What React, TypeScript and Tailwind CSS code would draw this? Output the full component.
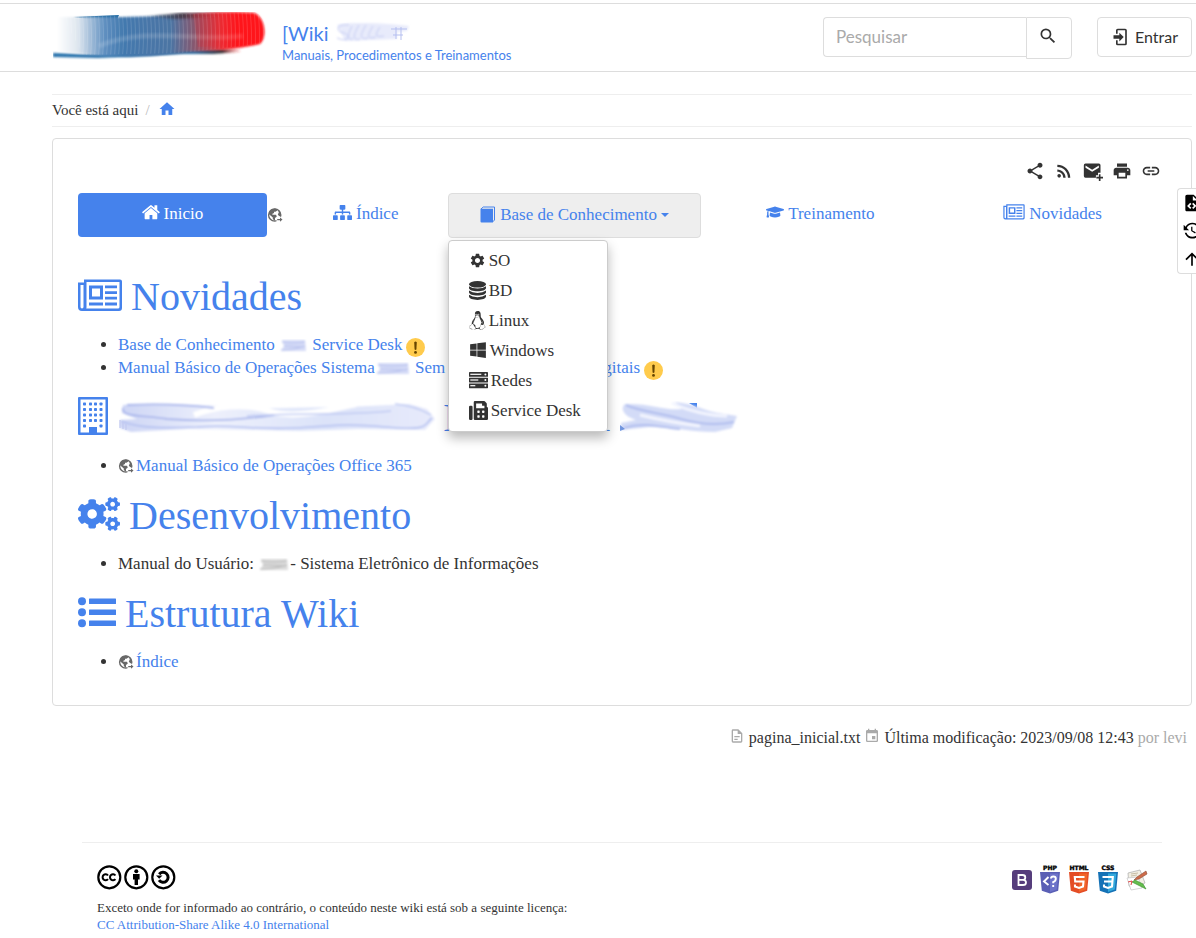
import React from "react";
import { FaCogs, FaFax, FaGraduationCap, FaLinux, FaSitemap, FaWindows } from "react-icons/fa";
import { MdHome, MdLink, MdPrint, MdRssFeed, MdSettings, MdShare } from "react-icons/md";

const P = {
  magnify:
    "M9.5,3A6.5,6.5 0 0,1 16,9.5C16,11.11 15.41,12.59 14.44,13.73L14.71,14H15.5L20.5,19L19,20.5L14,15.5V14.71L13.73,14.44C12.59,15.41 11.11,16 9.5,16A6.5,6.5 0 0,1 3,9.5A6.5,6.5 0 0,1 9.5,3M9.5,5C7,5 5,7 5,9.5C5,12 7,14 9.5,14C12,14 14,12 14,9.5C14,7 12,5 9.5,5Z",
  login:
    "M10,17.25V14H3V10H10V6.75L15.25,12L10,17.25M8,2H17A2,2 0 0,1 19,4V20A2,2 0 0,1 17,22H8A2,2 0 0,1 6,20V16H8V20H17V4H8V8H6V4A2,2 0 0,1 8,2Z",
  mailPlus:
    "M3 3A2 2 0 0 0 1 5V18A2 2 0 0 0 3 20H15.5V17H18V14H21V5A2 2 0 0 0 19 3H3M3 5.5L11 10.5L19 5.5V8L11 13L3 8V5.5M19 16V19H16V21H19V24H21V21H24V19H21V16H19Z",
  fileXml:
    "M13,9H18.5L13,3.5V9M6,2H14L20,8V20A2,2 0 0,1 18,22H6C4.89,22 4,21.1 4,20V4C4,2.89 4.89,2 6,2M6.12,15.5L9.86,19.24L11.28,17.83L8.95,15.5L11.28,13.17L9.86,11.76L6.12,15.5M17.28,15.5L13.54,11.76L12.12,13.17L14.45,15.5L12.12,17.83L13.54,19.24L17.28,15.5Z",
  history:
    "M11,7V12.11L15.71,14.9L16.5,13.62L12.5,11.25V7M12.5,2C8.97,2 5.91,3.92 4.27,6.77L2,4.5V11H8.5L5.75,8.25C6.96,5.73 9.5,4 12.5,4A7.5,7.5 0 0,1 20,11.5A7.5,7.5 0 0,1 12.5,19C9.23,19 6.47,16.91 5.44,14H3.34C4.44,18.03 8.11,21 12.5,21C17.74,21 22,16.75 22,11.5A9.5,9.5 0 0,0 12.5,2Z",
  arrowUp: "M13,20H11V8L5.5,13.5L4.08,12.08L12,4.16L19.92,12.08L18.5,13.5L13,8V20Z",
  file: "M6,2A2,2 0 0,0 4,4V20A2,2 0 0,0 6,22H18A2,2 0 0,0 20,20V8L14,2H6M6,4H13V9H18V20H6V4M8,12V14H16V12H8M8,16V18H13V16H8Z",
  calendar:
    "M19,19H5V8H19M16,1V3H8V1H6V3H5C3.89,3 3,3.89 3,5V19A2,2 0 0,0 5,21H19A2,2 0 0,0 21,19V5C21,3.89 20.1,3 19,3H18V1M17,12H12V17H17V12Z",
};

function Mdi({ d, className }: { d: string; className: string }) {
  return (
    <svg viewBox="0 0 24 24" fill="currentColor" aria-hidden="true" className={className}>
      <path d={d} />
    </svg>
  );
}

function Logo() {
  return (
    <svg viewBox="0 0 214 48" className="mb-1 h-12 w-[214px] shrink-0" aria-hidden="true">
      <defs>
        <linearGradient id="lg" x1="0" x2="1">
          <stop offset="0" stopColor="#fff" />
          <stop offset=".1" stopColor="#dfe7ef" />
          <stop offset=".23" stopColor="#5f8fc0" />
          <stop offset=".32" stopColor="#4379ae" />
          <stop offset=".55" stopColor="#4c74a3" />
          <stop offset=".66" stopColor="#86586f" />
          <stop offset=".8" stopColor="#ee2c33" />
          <stop offset=".88" stopColor="#ff151b" />
        </linearGradient>
        <linearGradient id="ll" x1="0" x2="1">
          <stop offset="0" stopColor="#2772ac" />
          <stop offset=".75" stopColor="#2f70a5" />
          <stop offset=".9" stopColor="#3d3338" />
          <stop offset="1" stopColor="#ff2020" stopOpacity=".1" />
        </linearGradient>
        <linearGradient id="lt" x1="0" x2="1">
          <stop offset="0" stopColor="#3a3a40" stopOpacity="0" />
          <stop offset=".5" stopColor="#3a2a30" stopOpacity=".7" />
          <stop offset="1" stopColor="#ff2020" stopOpacity="0" />
        </linearGradient>
        <pattern id="lr" width="4" height="48" patternUnits="userSpaceOnUse">
          <path d="M1 0C3 15 3 33 1 48" fill="none" stroke="#fff" strokeOpacity=".13" />
        </pattern>
        <filter id="b1" x="-10%" y="-30%" width="120%" height="160%">
          <feGaussianBlur stdDeviation="1" />
        </filter>
      </defs>
      <path d="M20 5L66 3L64 8H40Z" fill="#226ca4" />
      <path d="M0 41L30 42L110 36L186 37L188 40L160 42L130 42L45 46L0 45Z" fill="url(#ll)" filter="url(#b1)" />
      <path d="M4 5C45 5 90 6 125 2C155 0 186 0 201 1C213 6 214 26 207 32C195 35 184 36 170 38L133 40C90 46 70 46 20 41L4 39Z" fill="url(#lg)" filter="url(#b1)" />
      <path d="M90 4L125 1L170 1V5L120 7Z" fill="url(#lt)" filter="url(#b1)" />
      <path d="M46 34C95 14 140 30 190 24" fill="none" stroke="#fff" strokeOpacity=".14" strokeWidth="5" filter="url(#b1)" />
      <path d="M140 2C155 0 186 0 201 0C214 4 215 28 206 32C190 35 155 34 145 35Z" fill="#ff151b" fillOpacity=".15" />
      <path d="M10 5L125 2L200 0C214 4 215 28 206 32L130 41L30 43Z" fill="url(#lr)" />
    </svg>
  );
}

function TitleSmudge() {
  return (
    <svg viewBox="0 0 76 24" className="h-6 w-[76px]" aria-hidden="true">
      <defs>
        <filter id="b2"><feGaussianBlur stdDeviation=".9" /></filter>
      </defs>
      <path d="M2 4C15 0 60 3 74 5L72 10L62 11V18L10 20Z" fill="#e8ebfb" filter="url(#b2)" />
      <path d="M14 4Q3 3 3 8Q3 11 9 12Q15 14 12 18Q8 20 2 17M17 5Q9 20 18 18M24 4Q14 21 25 18M31 4Q21 20 33 17M38 5Q28 20 41 16M45 6Q36 18 49 15" fill="none" stroke="#c4cbf2" strokeWidth="1" filter="url(#b2)" />
      <path d="M56 8H72M58 14H68M66 6V19M61 6V18" stroke="#b5bff0" strokeWidth="1" fill="none" />
    </svg>
  );
}

function Smear({ className, w, tone }: { className: string; w: number; tone: "blue" | "gray" }) {
  const id = `sm${w}${tone}`;
  const base = tone === "blue" ? "#d6dcf7" : "#dcdcdc";
  const dark = tone === "blue" ? "#b3bdec" : "#b3b3b3";
  return (
    <svg viewBox={`0 0 ${w} 14`} className={className} aria-hidden="true">
      <defs>
        <filter id={id} x="-20%" y="-30%" width="140%" height="160%"><feGaussianBlur stdDeviation="1" /></filter>
      </defs>
      <g filter={`url(#${id})`} fill="none">
        <path d={`M3 1H${w - 3}L${w - 2} 12H2L5 7Z`} fill={base} />
        <path d={`M3 3Q${w / 2} 5 ${w - 3} 3M2 11Q${w / 2} 11 ${w - 3} 7M5 7L${w - 5} 8`} stroke={dark} strokeWidth="1.2" />
      </g>
    </svg>
  );
}

function LongSmear() {
  return (
    <svg viewBox="0 0 320 34" className="h-[34px] w-80 shrink-0" aria-hidden="true">
      <defs>
        <linearGradient id="ls" x1="0" x2="1">
          <stop offset="0" stopColor="#cdd5f5" />
          <stop offset=".3" stopColor="#edf0fc" />
          <stop offset=".65" stopColor="#dce3f9" />
          <stop offset="1" stopColor="#e7eafb" />
        </linearGradient>
        <filter id="b3"><feGaussianBlur stdDeviation="1.3" /></filter>
      </defs>
      <g filter="url(#b3)" fill="none">
        <path d="M4 4C60 0 100 6 160 7L230 6L290 3L308 8L316 18L306 29L240 28L180 30L70 28L12 31L1 27L1 19L18 18L3 12Z" fill="url(#ls)" />
        <path d="M75 14C95 6 125 1 150 10S215 8 237 3" stroke="#fff" strokeWidth="6" />
        <path d="M8 4C45 2 70 4 95 7M4 7C2 17 28 14 48 18C85 21 115 20 155 14" stroke="#aab7ec" strokeWidth="1.8" />
        <path d="M2 20C20 28 50 27 78 26C115 23 132 29 175 27S220 22 266 26S304 24 313 17" stroke="#b3c0f0" strokeWidth="1.6" />
        <path d="M128 15C190 11 218 15 272 10M276 3C298 5 306 11 312 14" stroke="#c0cbf3" strokeWidth="1.5" />
      </g>
      <path d="M1 19V27M4 21V28M7 23V29" stroke="#c3caf1" strokeWidth="1.2" />
    </svg>
  );
}

function ShortSmear() {
  return (
    <svg viewBox="0 0 120 34" className="h-[34px] w-[120px] shrink-0" aria-hidden="true">
      <defs><filter id="b4"><feGaussianBlur stdDeviation="1.2" /></filter></defs>
      <path d="M69 2H77V7Z" fill="#4582ec" />
      <g filter="url(#b4)">
        <path d="M5 3C30 2 45 10 62 8L55 1C75 3 85 10 98 12L117 15L112 27L95 31C70 31 55 26 30 26L1 29V22L16 19C3 15 0 7 5 3Z" fill="#d3dbf7" />
        <path d="M6 4C20 11 45 12 61 18C82 24 100 24 114 21M4 27C25 20 45 27 60 28" fill="none" stroke="#b0bdee" strokeWidth="2" />
        <path d="M20 14C40 19 55 22 80 25M52 2C68 10 91 15 107 15" fill="none" stroke="#f3f5fe" strokeWidth="3" />
      </g>
      <path d="M0 24V30L5 28Z" fill="#547fd7" fillOpacity=".8" />
    </svg>
  );
}

function Globe() {
  return (
    <svg viewBox="0 0 16 16" className="inline-block size-4 shrink-0 text-[#686868]" aria-hidden="true">
      <circle cx="7.7" cy="8" r="6.1" fill="#fff" stroke="currentColor" strokeWidth="1.4" />
      <path d="M2 5L4 2.4L8 1.4L10 2.2V3.8L8.4 4.8H7V6L5.4 6.8V7.8H9L9.8 9.6L8 11V14L5.8 12V10.4L2 7.2Z" fill="currentColor" />
      <path d="M11.2 3L13.6 6V9H12L10.8 7.6L11.8 5.6Z" fill="currentColor" />
      <path d="M10 9.8H16V15H9.5V11.5Z" fill="#fff" />
      <path d="M10.2 11.9H13V10.4L15.5 12.6L13 14.8V13.3H10.2Z" fill="currentColor" />
    </svg>
  );
}

function Newspaper({ className }: { className: string }) {
  return (
    <svg viewBox="0 0 44 33" className={className} fill="currentColor" aria-hidden="true">
      <path fillRule="evenodd" d="M6 .5H42Q44 .5 44 2.5V29Q44 32 41 32H4Q0 32 0 28V3.5H6ZM8.5 3V28Q8.5 29 8.2 29.5H40Q41.5 29.5 41.5 28V3ZM2.5 6V28Q2.5 29.4 4 29.4T5.5 28V6Z" />
      <path fillRule="evenodd" d="M11 6.5H25V20.5H11ZM14 9.5V17.5H22V9.5Z" />
      <path d="M27 6.5H39V9.3H27ZM27 12.2H39V15H27ZM27 17.8H39V20.6H27ZM11 23.6H25V26.4H11ZM27 23.6H39V26.4H27Z" />
    </svg>
  );
}

function Building() {
  const xs = [5, 11, 16, 21.5];
  const ys = [5.5, 11, 16.5, 22, 27.5];
  return (
    <svg viewBox="0 0 30 38" className="h-[38px] w-[30px] shrink-0" fill="currentColor" aria-hidden="true">
      <path fillRule="evenodd" d="M1 0H29Q30 0 30 1V37Q30 38 29 38H1Q0 38 0 37V1Q0 0 1 0ZM2.5 2.5V35.5H11V30H19V35.5H27.5V2.5Z" />
      {ys.map((y, r) =>
        xs.map((x, c) => (r === 4 && (c === 1 || c === 2) ? null : <rect key={`${r}-${c}`} x={x} y={y} width="3" height="3" rx=".7" />)),
      )}
    </svg>
  );
}

function ListUl() {
  return (
    <svg viewBox="0 0 38 31" className="h-[31px] w-[38px] shrink-0" fill="currentColor" aria-hidden="true">
      {[4.2, 15.2, 26.2].map((y) => (
        <g key={y}>
          <circle cx="4" cy={y} r="4" />
          <rect x="11" y={y - 2.7} width="27" height="5.4" rx=".5" />
        </g>
      ))}
    </svg>
  );
}

function House() {
  return (
    <svg viewBox="80 200 1640 1360" className="h-4 w-[18px] shrink-0" fill="currentColor" aria-hidden="true">
      <path d="M1472 992v480q0 26-19 45t-45 19h-384v-384h-256v384h-384q-26 0-45-19t-19-45v-480q0-1 .5-3t.5-3l575-474 575 474q1 2 1 6zm223-69l-62 74q-8 9-21 11h-3q-13 0-21-7l-692-577-692 577q-12 8-24 7-13-2-21-11l-62-74q-8-10-7-23.5t11-21.5l719-599q32-26 76-26t76 26l244 204v-195q0-14 9-23t23-9h192q14 0 23 9t9 23v408l219 182q10 8 11 21.5t-7 23.5z" />
    </svg>
  );
}

function Book() {
  return (
    <svg viewBox="0 0 16 17" className="h-[17px] w-4 shrink-0" aria-hidden="true">
      <path d="M1 3L3.2 1H14.5V14L12.5 16" fill="none" stroke="#4582ec" strokeWidth="1" />
      <path d="M.5 2.7H13V16.5H1.5Q.5 16.5 .5 15.5Z" fill="#4582ec" />
    </svg>
  );
}

function Database() {
  return (
    <svg viewBox="0 0 17 19" className="h-[19px] w-[17px] shrink-0" fill="currentColor" aria-hidden="true">
      <ellipse cx="8.5" cy="3.3" rx="8.5" ry="3.3" />
      {[0, 4.3, 8.6].map((y) => (
        <path key={y} transform={`translate(0 ${y})`} d="M0 5.2Q3 7.6 8.5 7.6T17 5.2V7C17 9 13 10.3 8.5 10.3S0 9 0 7Z" />
      ))}
    </svg>
  );
}

function Server() {
  return (
    <svg viewBox="0 0 19 17" className="h-[17px] w-[19px] shrink-0" aria-hidden="true">
      {[0, 5.7, 11.4].map((y, i) => (
        <g key={y}>
          <rect y={y} width="19" height="4.8" rx=".4" fill="#333" />
          <rect x="1.3" y={y + 1.7} width={i === 0 ? 11 : i === 1 ? 8 : 5} height="1.2" fill="#fff" />
          <circle cx="16.4" cy={y + 2.4} r="1" fill="#fff" />
        </g>
      ))}
    </svg>
  );
}

function Warn() {
  return (
    <svg viewBox="0 0 19 19" className="ml-1 inline-block size-[19px] shrink-0 translate-y-px" role="img" aria-label="Atenção">
      <circle cx="9.5" cy="9.5" r="9.5" fill="#ffcb4c" />
      <path d="M8.2 4.2Q9.5 3 10.8 4.2L10.4 11.6Q9.5 12.4 8.6 11.6Z" fill="#664500" />
      <circle cx="9.5" cy="14.4" r="1.4" fill="#664500" />
    </svg>
  );
}

function License() {
  return (
    <svg viewBox="0 0 79 25" className="h-[25px] w-[79px]" role="img" aria-label="CC BY-SA">
      <g fill="none" stroke="#000" strokeWidth="2.2">
        <circle cx="12.3" cy="12.3" r="11" />
        <circle cx="39.3" cy="12.3" r="11" />
        <circle cx="66.3" cy="12.3" r="11" />
        <path d="M11 10.5A3 3 0 1 0 11 14.1M18.4 10.5A3 3 0 1 0 18.4 14.1" strokeWidth="2" />
        <path d="M62.2 9.2A5 5 0 1 1 62 15.2" strokeWidth="3" />
      </g>
      <path d="M59 10.5H65.5L62.2 13.8Z" />
      <circle cx="39.3" cy="6.2" r="2" />
      <path d="M36 9H42.6V14.5H41V20H37.6V14.5H36Z" />
    </svg>
  );
}

function Shield({ id, label, dark, light, children }: { id: string; label: string; dark: string; light: string; children: React.ReactNode }) {
  return (
    <svg viewBox="0 0 22 29" className="h-[29px] w-[22px]" role="img" aria-label={id}>
      <text x="11" y="5" textAnchor="middle" fontSize="6" fontWeight="900" fontFamily="DejaVu Sans, sans-serif" stroke="#000" strokeWidth=".4">{label}</text>
      <path d="M1 7H21L19.2 25.8L11 28.5L2.8 25.8Z" fill={dark} />
      <path d="M11 8.5H19.3L17.8 24.6L11 26.9Z" fill={light} />
      <g fill="none" stroke="#fff" strokeWidth="2.1">{children}</g>
    </svg>
  );
}

function Badges() {
  return (
    <div className="flex items-center gap-[7px]">
      <a href="#bootstrap" aria-label="Bootstrap">
        <svg viewBox="0 0 20 20" className="size-5">
          <rect width="20" height="20" rx="3" fill="#563d7c" />
          <path d="M6.5 5H10.5Q13.3 5 13.3 7.4T10.7 9.8H6.5ZM6.5 9.8H11Q14 9.8 14 12.4T11 15H6.5Z" fill="none" stroke="#fff" strokeWidth="1.8" />
        </svg>
      </a>
      <a href="#php"><Shield id="PHP" label="PHP" dark="#5a5fb5" light="#6d73c9"><path d="M9.5 12L5 16.5L9.5 20M12 13.5Q12 11.5 14.4 11.5T16.8 13.7T14.2 17V18.3M14.2 20V22" strokeWidth="1.9" /></Shield></a>
      <a href="#html"><Shield id="HTML5" label="HTML" dark="#e44d26" light="#f16529"><path d="M16.5 12H6.8L7.2 16.5H15.5L15 21.5L11 23L7 21.5V19.5" /></Shield></a>
      <a href="#css"><Shield id="CSS3" label="CSS" dark="#1572b6" light="#33a9dc"><path d="M5.5 12H15.8L15 21.5L11 23L7 21.5V19.5M7 16.5H15.5" /></Shield></a>
      <a href="#dokuwiki" aria-label="DokuWiki">
        <svg viewBox="0 0 22 22" className="size-[22px]">
          <path d="M2 4L14 1L19 14L9 19L3 17Z" fill="#f2efe4" stroke="#aaa" strokeWidth=".7" />
          <path d="M1 9L12 8L16 19L5 21Z" fill="#fff" stroke="#bbb" strokeWidth=".6" />
          <path d="M5 5L12 4M5 7L11 6" stroke="#c8bea6" />
          <path d="M20 2L11 8L8 11L13 10L21 5Z" fill="#ce6b49" stroke="#8a4c36" strokeWidth=".6" />
          <path d="M6 13L16 18L20 20L17 15L9 11Z" fill="#64bd4d" stroke="#358b2a" strokeWidth=".6" />
          <path d="M2 13L6 12L5 16" stroke="#e04444" fill="none" />
        </svg>
      </a>
    </div>
  );
}

const MENU = [
  { label: "SO", icon: <MdSettings className="size-[17px]" /> },
  { label: "BD", icon: <Database /> },
  { label: "Linux", icon: <FaLinux className="h-[19px] w-[17px]" /> },
  { label: "Windows", icon: <FaWindows className="size-[18px]" /> },
  { label: "Redes", icon: <Server /> },
  { label: "Service Desk", icon: <FaFax className="size-[19px]" /> },
];

const H = "mt-[19px] flex h-10 items-center gap-[9px] text-[40px] leading-10 text-[#4582ec] [&>svg]:mb-1";
const UL = "mt-4 list-disc pl-10 leading-[23px]";
const NAV = "flex h-11 items-center justify-center gap-1 rounded pb-0.5 [&>svg]:mb-1";

export default function App() {
  return (
    <div className="relative bg-white pt-[3px] font-['Liberation_Serif',serif] text-[17px] text-[#333]">
      <header className="flex h-[69px] items-center border-y border-[#ddd] pr-1 pl-[53px] font-[Lato,sans-serif]">
        <Logo />
        <a href="#wiki" className="ml-[15px] block pt-2 text-[#4582ec]">
          <span className="flex h-[26px] items-center gap-1.5 text-xl">
            [Wiki <TitleSmudge />
          </span>
          <span className="block text-[13px] leading-[18px]">Manuais, Procedimentos e Treinamentos</span>
        </a>
        <div className="ml-auto flex items-start">
          <form className="flex items-start" onSubmit={(e) => e.preventDefault()}>
            <input
              type="search"
              aria-label="Pesquisar"
              placeholder="Pesquisar"
              className="h-10 w-[203px] rounded-l border border-r-0 border-[#ddd] px-3 text-[17px] outline-none placeholder:text-[#aaa]"
            />
            <button type="submit" aria-label="Buscar" className="flex h-[42px] w-[46px] items-center justify-center rounded-r border border-[#ddd] pr-0.5 pb-1">
              <Mdi d={P.magnify} className="size-5" />
            </button>
          </form>
          <button type="button" className="ml-[25px] flex h-10 w-[95px] items-center justify-center gap-1 rounded border border-[#ddd] text-base">
            <Mdi d={P.login} className="size-5" />
            Entrar
          </button>
        </div>
      </header>

      <div className="pr-1 pl-[52px]">
        <nav aria-label="Você está aqui" className="mt-[22px] flex h-[33px] items-center border-y border-[#eee] text-[15px]">
          <span>Você está aqui</span>
          <span className="ml-[7px] text-[#bbb]">/</span>
          <a href="#home" aria-label="Início" className="mb-1 ml-2 text-[#4582ec]">
            <MdHome className="size-[18px]" />
          </a>
        </nav>

        <main className="mt-[11px] rounded border border-[#ddd] px-[25px] pt-[22px] pb-8">
          <div className="flex justify-end gap-[9px] pr-[5px]">
            <button type="button" aria-label="Compartilhar"><MdShare className="size-5" /></button>
            <button type="button" aria-label="Feed"><MdRssFeed className="size-5" /></button>
            <button type="button" aria-label="Enviar por e-mail"><Mdi d={P.mailPlus} className="size-5" /></button>
            <button type="button" aria-label="Imprimir"><MdPrint className="size-5" /></button>
            <button type="button" aria-label="Link"><MdLink className="size-5" /></button>
          </div>

          <nav aria-label="Principal" className="mt-3 grid grid-cols-[206fr_164fr_254fr_238fr_227fr] items-start">
            <div className="flex items-center">
              <a href="#inicio" className={`${NAV} flex-1 bg-[#4582ec] text-white`}>
                <House /> Inicio
              </a>
              <span className="flex w-[17px]"><Globe /></span>
            </div>
            <a href="#indice" className={`${NAV} text-[#4582ec]`}><FaSitemap className="size-[19px]" /> Índice</a>
            <div className="relative">
              <button type="button" aria-expanded="true" aria-haspopup="menu" className="flex h-[45px] w-full items-center justify-center gap-1 rounded border border-[#ddd] bg-[#eee] pb-0.5 text-[#4582ec]">
                <Book /> Base de Conhecimento
                <svg viewBox="0 0 8 4" className="h-1 w-2" fill="currentColor" aria-hidden="true"><path d="M0 0H8L4 4Z" /></svg>
              </button>
              <ul className="absolute top-[47px] left-0 z-10 w-40 rounded border border-[#ccc] bg-white py-[5px] shadow-[0_6px_12px_rgba(0,0,0,0.28)]">
                {MENU.map((m) => (
                  <li key={m.label}>
                    <a href={`#${m.label}`} className="flex h-[30px] items-center gap-[3px] pl-5 [&>svg]:mb-0.5">
                      {m.icon}
                      {m.label}
                    </a>
                  </li>
                ))}
              </ul>
            </div>
            <a href="#treinamento" className={`${NAV} text-[#4582ec]`}><FaGraduationCap className="size-[18px]" /> Treinamento</a>
            <a href="#novidades" className={`${NAV} text-[#4582ec]`}><Newspaper className="h-4 w-[22px]" /> Novidades</a>
          </nav>

          <div className="pt-5">
            <h1 className={H}><Newspaper className="h-[33px] w-11 shrink-0" /> Novidades</h1>
            <ul className={UL}>
              <li className="h-[23px]">
                <a href="#base" className="text-[#4582ec]">
                  Base de Conhecimento <Smear w={29} tone="blue" className="inline-block h-3.5 w-[29px]" /> Service Desk
                </a>
                <Warn />
              </li>
              <li className="h-[23px] whitespace-nowrap">
                <a href="#manual" className="text-[#4582ec]">
                  Manual Básico de Operações Sistema
                  <Smear w={36} tone="blue" className="inline-block h-3.5 w-9" /> Sem
                  <span className="inline-block w-[158px]" />
                  gitais
                </a>
                <Warn />
              </li>
            </ul>

            <h2 className={H}>
              <Building />
              <span className="ml-0.5 flex items-center">
                <LongSmear />
                <span className="ml-1">I</span>
                <span className="ml-[143px]">l</span>
                <span className="ml-2.5"><ShortSmear /></span>
              </span>
            </h2>
            <ul className={UL}>
              <li><a href="#office" className="inline-flex items-center gap-0.5 align-top text-[#4582ec]"><Globe />Manual Básico de Operações Office 365</a></li>
            </ul>

            <h2 className={H}><FaCogs className="size-[42px] shrink-0" /> Desenvolvimento</h2>
            <ul className={UL}>
              <li>Manual do Usuário: <Smear w={32} tone="gray" className="inline-block h-3.5 w-8" />- Sistema Eletrônico de Informações</li>
            </ul>

            <h2 className={H}><ListUl /> Estrutura Wiki</h2>
            <ul className={UL}>
              <li><a href="#indice" className="inline-flex items-center gap-0.5 align-top text-[#4582ec]"><Globe />Índice</a></li>
            </ul>
          </div>
        </main>

        <div className="mt-[22px] flex h-5 items-center justify-end gap-1 pr-[5px] text-base [&>svg]:mb-1">
          <Mdi d={P.file} className="size-4 text-[#aaa]" />
          <span>pagina_inicial.txt</span>
          <Mdi d={P.calendar} className="size-4 text-[#aaa]" />
          <span>Última modificação: 2023/09/08 12:43</span>
          <span className="text-[#aaa]">por levi</span>
        </div>

        <footer className="mx-[30px] mt-[94px] flex items-start justify-between border-t border-[#eee] pt-[22px] pr-3.5 pl-[15px] text-[13px] leading-[17px]">
          <div>
            <License />
            <p className="mt-[9px]">Exceto onde for informado ao contrário, o conteúdo neste wiki está sob a seguinte licença:</p>
            <a href="#licenca" className="text-[#4582ec]">CC Attribution-Share Alike 4.0 International</a>
          </div>
          <Badges />
        </footer>
      </div>

      <div className="absolute top-[188px] right-0 flex h-[86px] w-[19px] flex-col justify-between overflow-hidden rounded-l border border-r-0 border-[#ddd] bg-white py-1 pl-1 text-black">
        <button type="button" aria-label="Mostrar código fonte"><Mdi d={P.fileXml} className="size-5" /></button>
        <button type="button" aria-label="Revisões anteriores"><Mdi d={P.history} className="size-5" /></button>
        <button type="button" aria-label="Voltar ao topo"><Mdi d={P.arrowUp} className="size-5" /></button>
      </div>
    </div>
  );
}
